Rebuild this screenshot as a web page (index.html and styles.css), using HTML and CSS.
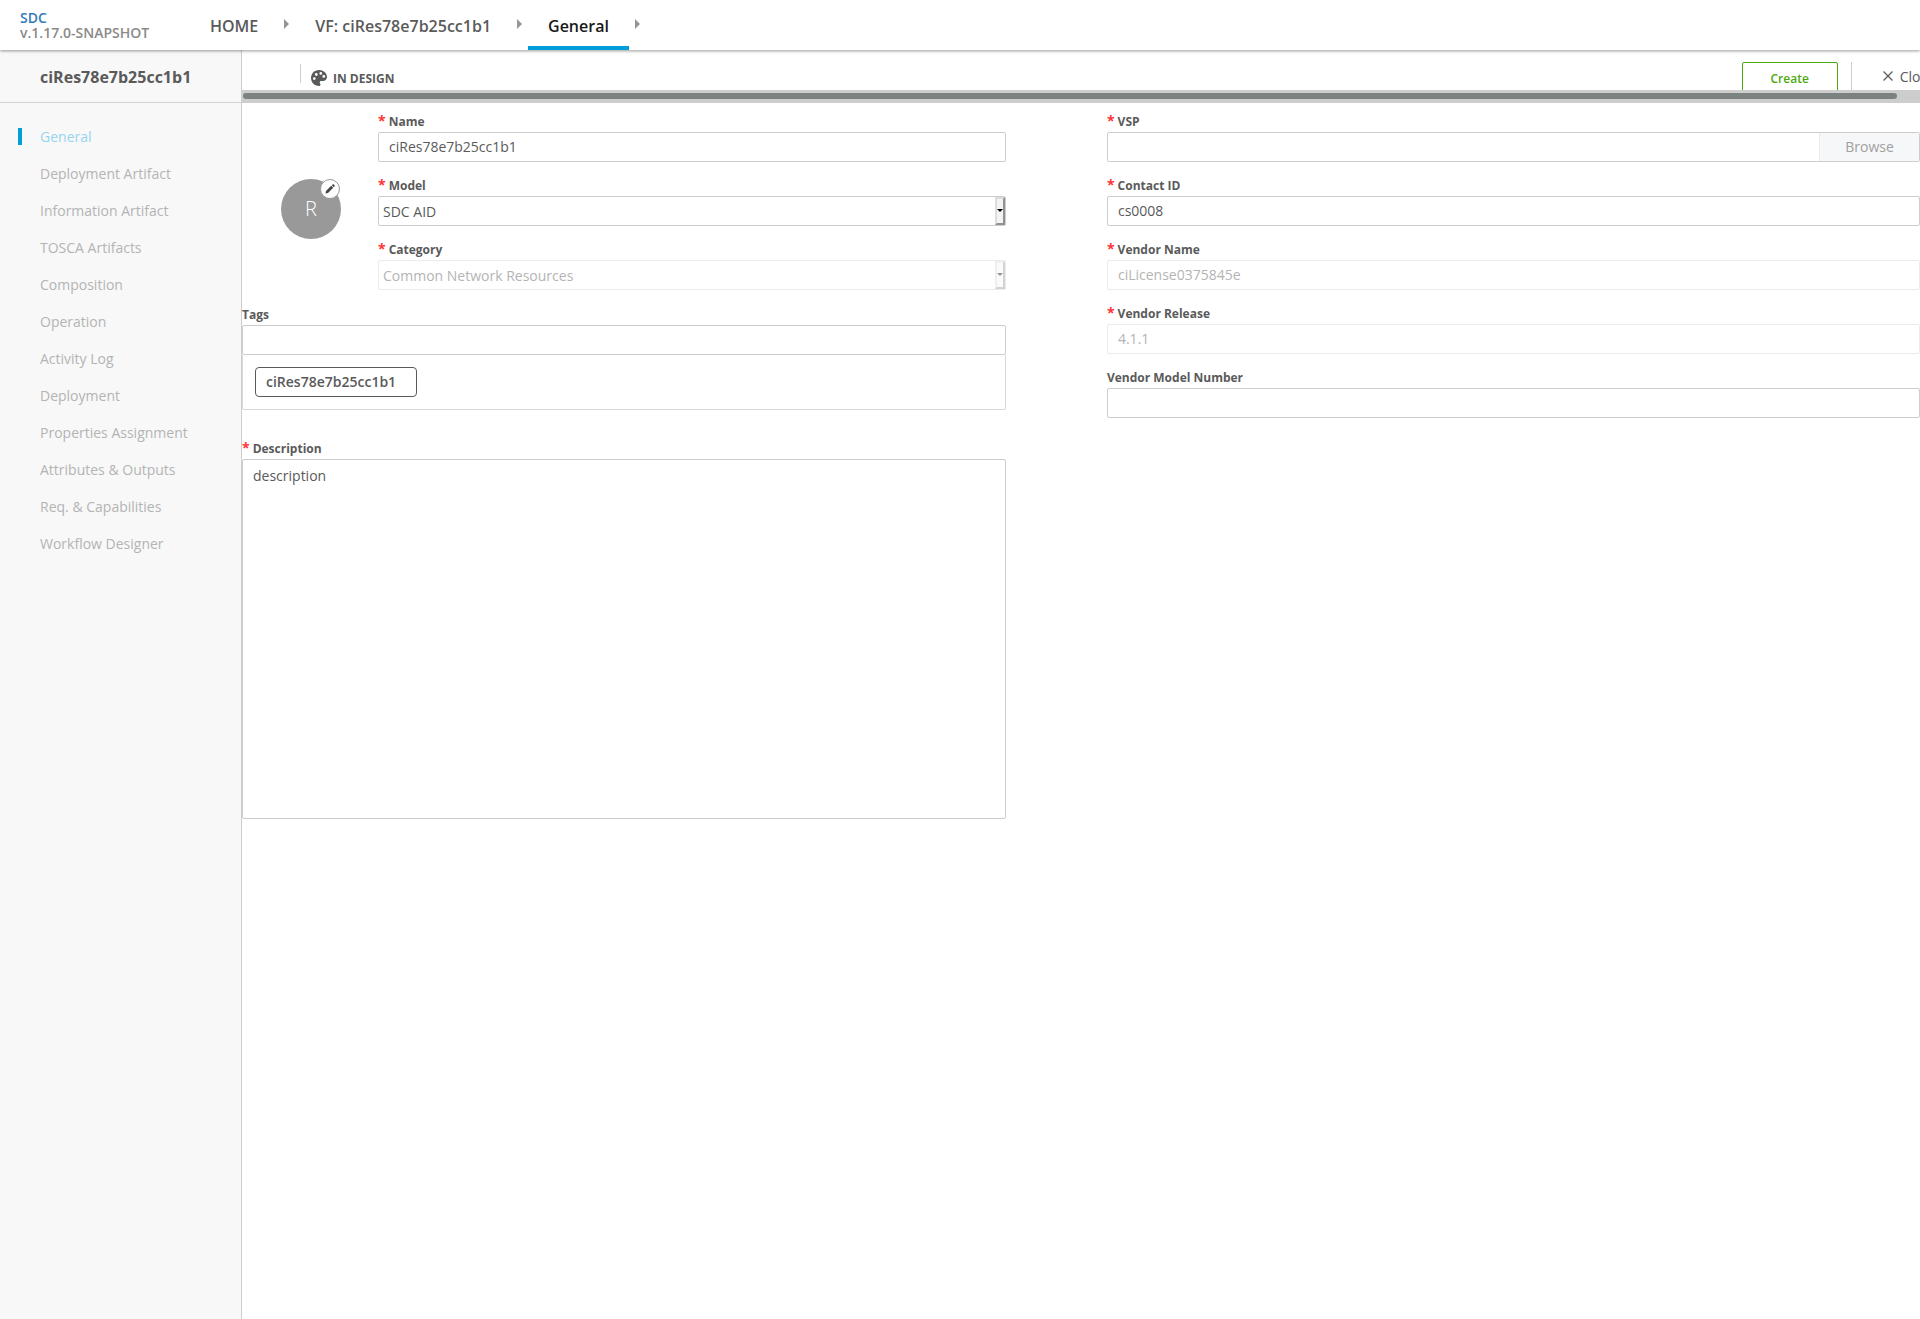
FILE: index.html
```html
<!DOCTYPE html>
<html lang="en">
  <head>
    <meta charset="UTF-8" />
    <meta name="viewport" content="width=device-width, initial-scale=1.0" />
    <title>SDC - General</title>
    <link rel="stylesheet" href="styles.css">
  </head>
  <body>
    <header class="top-nav">
      <div class="logo">
        <a href="#">SDC</a>
        <span class="version">v.1.17.0-SNAPSHOT</span>
      </div>
      <nav class="breadcrumbs">
        <a href="#" class="crumb">HOME</a>
        <span class="arrow"></span>
        <a href="#" class="crumb">VF: ciRes78e7b25cc1b1</a>
        <span class="arrow"></span>
        <a href="#" class="crumb selected">General</a>
        <span class="arrow"></span>
      </nav>
    </header>

    <div class="workspace">
      <aside class="sidebar">
        <h1 class="sidebar-title">ciRes78e7b25cc1b1</h1>
        <nav class="menu">
          <a href="#" class="menu-item selected">General</a>
          <a href="#" class="menu-item">Deployment Artifact</a>
          <a href="#" class="menu-item">Information Artifact</a>
          <a href="#" class="menu-item">TOSCA Artifacts</a>
          <a href="#" class="menu-item">Composition</a>
          <a href="#" class="menu-item">Operation</a>
          <a href="#" class="menu-item">Activity Log</a>
          <a href="#" class="menu-item">Deployment</a>
          <a href="#" class="menu-item">Properties Assignment</a>
          <a href="#" class="menu-item">Attributes &amp; Outputs</a>
          <a href="#" class="menu-item">Req. &amp; Capabilities</a>
          <a href="#" class="menu-item">Workflow Designer</a>
        </nav>
      </aside>

      <main class="content">
        <div class="toolbar">
          <div class="toolbar-row">
            <div class="status">
              <svg width="16" height="16" viewBox="0 0 16 16">
                <path fill="#5a5a5a" fill-rule="evenodd" d="M8 0C3.500 0 0 3.600 0 8s3.600 8 8 8c.9 0 1.500-.7 1.500-1.500 0-.4-.2-.8-.4-1-.3-.3-.4-.6-.4-1 0-.8.600-1.500 1.400-1.500H12c2.300 0 4-1.700 4-4C16 3 12.400 0 8 0zM3.300 7.200a1.400 1.400 0 1 0 0 2.800 1.400 1.400 0 0 0 0-2.800zM5.300 3.100a1.400 1.400 0 1 0 0 2.800 1.400 1.400 0 0 0 0-2.800zM9.800 2a1.400 1.400 0 1 0 0 2.800 1.400 1.400 0 0 0 0-2.800zM12.800 5a1.400 1.400 0 1 0 0 2.800 1.400 1.400 0 0 0 0-2.800z"/>
              </svg>
              IN DESIGN
            </div>
            <button type="button" class="create-btn">Create</button>
            <button type="button" class="close-btn">
              <svg width="10" height="10" viewBox="0 0 10 10">
                <path d="M0.500 0.500 9.500 9.500M9.500 0.500 0.500 9.500" stroke="#5a5a5a" stroke-width="1.300" fill="none"/>
              </svg>
              Close
            </button>
          </div>
        </div>
        <div class="scrollbar"><div class="thumb"></div></div>

        <form class="general-form">
          <div class="column">
            <div class="main-info">
              <div class="icon-area">
                <div class="avatar">
                  R
                  <button type="button" class="edit-icon" aria-label="Edit icon">
                    <svg width="10" height="10" viewBox="0 0 10 10">
                      <path fill="#444" d="M0.500 9.500 1 7 6.200 1.800 8.200 3.800 3 9zM6.800 1.200 7.600.5C8 .1 8.500.2 8.800.5l.7.7c.3.3.3.8 0 1.200l-.7.8z"/>
                    </svg>
                  </button>
                </div>
              </div>
              <div class="fields">
                <div class="field">
                  <label for="name" class="required">Name</label>
                  <input type="text" id="name" value="ciRes78e7b25cc1b1">
                </div>
                <div class="field">
                  <label for="model" class="required">Model</label>
                  <div class="select-box">
                    <select id="model"><option>SDC AID</option></select>
                  </div>
                </div>
                <div class="field">
                  <label for="category" class="required">Category</label>
                  <div class="select-box disabled">
                    <select id="category" disabled><option>Common Network Resources</option></select>
                  </div>
                </div>
              </div>
            </div>
            <div class="field tags-field">
              <label for="tags">Tags</label>
              <input type="text" id="tags">
              <div class="tags">
                <span class="tag">ciRes78e7b25cc1b1</span>
              </div>
            </div>
            <div class="field">
              <label for="description" class="required">Description</label>
              <textarea id="description">description</textarea>
            </div>
          </div>

          <div class="column">
            <div class="fields">
              <div class="field">
                <label for="vsp" class="required">VSP</label>
                <div class="browse-box">
                  <input type="text" id="vsp">
                  <button type="button">Browse</button>
                </div>
              </div>
              <div class="field">
                <label for="contact" class="required">Contact ID</label>
                <input type="text" id="contact" value="cs0008">
              </div>
              <div class="field">
                <label for="vendor-name" class="required">Vendor Name</label>
                <input type="text" id="vendor-name" value="ciLicense0375845e" disabled>
              </div>
              <div class="field">
                <label for="vendor-release" class="required">Vendor Release</label>
                <input type="text" id="vendor-release" value="4.1.1" disabled>
              </div>
              <div class="field">
                <label for="vendor-model">Vendor Model Number</label>
                <input type="text" id="vendor-model">
              </div>
            </div>
          </div>
        </form>
      </main>
    </div>
  </body>
</html>
```
FILE: styles.css
```css
*,
*::before,
*::after {
  box-sizing: border-box;
}

body {
  display: flex;
  flex-direction: column;
  min-height: 100vh;
  margin: 0;
  font-family: "Open Sans", Arial, sans-serif;
  font-size: 14px;
  color: #5a5a5a;
  background-color: #fff;
}

a {
  text-decoration: none;
  color: inherit;
}

input,
select,
textarea,
button {
  margin: 0;
  font: inherit;
  color: inherit;
}

button {
  cursor: pointer;
}

/* top navigation */
.top-nav {
  position: relative;
  z-index: 1;
  display: flex;
  height: 50px;
  padding-left: 20px;
  background-color: #fff;
  box-shadow: 0 1px 3px rgba(0, 0, 0, 0.4);
}

.logo {
  display: flex;
  flex-direction: column;
  width: 170px;
  padding-top: 10px;
  font-weight: 600;
  line-height: 15px;
}

.logo a {
  color: #337ab7;
}

.version {
  color: #8a8a8a;
}

.breadcrumbs {
  display: flex;
  align-items: center;
}

.crumb {
  height: 50px;
  padding: 0 20px;
  font-size: 16px;
  font-weight: 600;
  line-height: 52px;
}

.crumb.selected {
  color: #191919;
  border-bottom: 4px solid #009fdb;
}

.arrow {
  margin: 0 6px 2px;
  border: 5px solid transparent;
  border-left: 5px solid #959595;
  border-right: 0;
}

/* sidebar */
.workspace {
  display: flex;
  flex: 1;
}

.sidebar {
  flex: 0 0 242px;
  background-color: #f8f8f8;
  border-right: 1px solid #cdcdcd;
}

.sidebar-title {
  margin: 0;
  padding: 0 40px;
  height: 53px;
  font-size: 16px;
  font-weight: 700;
  line-height: 54px;
  border-bottom: 1px solid #d2d2d2;
}

.menu {
  display: flex;
  flex-direction: column;
  gap: 20px;
  padding: 25px 0 0 18px;
}

.menu-item {
  padding-left: 18px;
  line-height: 17px;
  color: #b4b4b4;
  border-left: 4px solid transparent;
}

.menu-item.selected {
  color: #97d5ef;
  border-left-color: #009fdb;
}

/* toolbar */
.content {
  flex: 1;
  min-width: 0;
}

.toolbar {
  height: 40px;
  overflow: hidden;
}

.toolbar-row {
  display: flex;
  align-items: flex-start;
  width: calc(100% + 22px);
  padding: 12px 0 0 58px;
}

.status {
  display: flex;
  align-items: center;
  gap: 6px;
  margin: 2px auto 0 0;
  padding-left: 11px;
  height: 28px;
  font-size: 12px;
  font-weight: 700;
  background: linear-gradient(#cdcdcd, #cdcdcd) no-repeat 0 0 / 1px 19px;
}

.create-btn {
  width: 96px;
  height: 32px;
  padding: 0;
  font-size: 12px;
  font-weight: 600;
  color: #4ca90c;
  background-color: #fff;
  border: 1px solid #4ca90c;
  border-radius: 2px;
}

.close-btn {
  display: flex;
  align-items: center;
  gap: 7px;
  height: 28px;
  margin-left: 13px;
  padding: 0 7px 0 31px;
  background: none;
  border: 0;
  border-left: 1px solid #cdcdcd;
}

.scrollbar {
  height: 13px;
  padding: 3px 23px 4px 1px;
  background-color: #cdcdcd;
}

.thumb {
  height: 6px;
  background-color: #7c8181;
  border-radius: 3px;
}

/* form */
.general-form {
  display: grid;
  grid-template-columns: 47fr 50fr;
  column-gap: 6%;
  padding-top: 9px;
}

.main-info {
  display: flex;
}

.icon-area {
  flex: 0 0 136px;
  padding: 67px 0 0 39px;
}

.avatar {
  position: relative;
  width: 60px;
  height: 60px;
  font-size: 20px;
  font-weight: 300;
  line-height: 60px;
  text-align: center;
  color: #fff;
  background-color: #999;
  border-radius: 50%;
}

.edit-icon {
  position: absolute;
  top: 0;
  right: 1px;
  display: flex;
  align-items: center;
  justify-content: center;
  width: 20px;
  height: 20px;
  padding: 0;
  background-color: #fff;
  border: 1px solid #999;
  border-radius: 50%;
}

.fields {
  display: flex;
  flex: 1;
  flex-direction: column;
  gap: 14px;
}

.field {
  display: flex;
  flex-direction: column;
}

.field label {
  height: 20px;
  font-size: 12px;
  font-weight: 700;
  line-height: 20px;
}

.required::before {
  content: "*";
  margin-right: 3px;
  font-size: 14px;
  line-height: 14px;
  color: #f33;
}

.field input,
.field select,
.field textarea {
  width: 100%;
  height: 30px;
  padding: 0 10px 2px;
  background-color: #fff;
  border: 1px solid #cdcdcd;
  border-radius: 2px;
  outline: none;
}

.field input:disabled,
.field select:disabled {
  color: #b4b4b4;
  border-color: #ebebeb;
  opacity: 1;
}

.field select {
  padding: 0 4px;
  appearance: none;
}

.select-box {
  position: relative;
}

.select-box::before {
  content: "";
  position: absolute;
  top: 1px;
  right: 1px;
  width: 10px;
  height: 28px;
  background-color: #f4f3f2;
  border: 2px solid;
  border-color: #dcdcdc #929292 #929292 #dcdcdc;
}

.select-box::after {
  content: "";
  position: absolute;
  top: 13px;
  right: 3px;
  border: 3px solid transparent;
  border-top-color: #000;
  border-bottom: 0;
}

.select-box.disabled::before,
.select-box.disabled::after {
  opacity: 0.4;
}

.browse-box {
  display: flex;
  border: 1px solid #cdcdcd;
  border-radius: 2px;
}

.browse-box input {
  height: 28px;
  border: 0;
}

.browse-box button {
  flex: 0 0 100px;
  padding: 0 0 2px;
  color: #a0a0a0;
  background-color: #f6f7f9;
  border: 0;
  border-left: 1px solid #ebebeb;
}

.tags-field {
  padding: 15px 0 29px;
}

.tags {
  padding: 12px;
  border: 1px solid #d8d8d8;
  border-top: 0;
  border-radius: 0 0 2px 2px;
}

.tag {
  display: inline-block;
  height: 30px;
  padding: 0 20px 0 10px;
  font-weight: 600;
  line-height: 28px;
  vertical-align: top;
  border: 1px solid #5a5a5a;
  border-radius: 4px;
}

.field textarea {
  display: block;
  height: 360px;
  padding: 6px 10px;
  resize: none;
}
```
